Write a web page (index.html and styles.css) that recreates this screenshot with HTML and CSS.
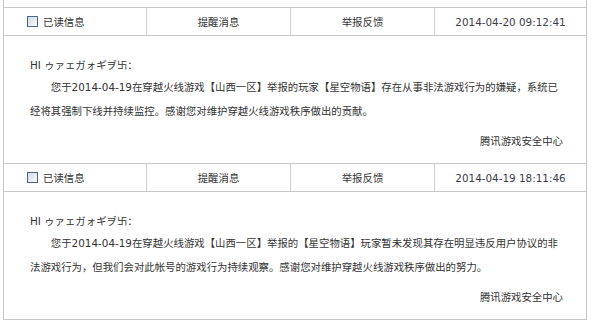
FILE: index.html
```html
<!DOCTYPE html>
<html lang="zh-CN">
    <head>
        <meta charset="UTF-8">
        <meta name="viewport" content="width=device-width, initial-scale=1.0">
        <title>消息中心</title>
        <link rel="stylesheet" href="styles.css">
    </head>
    <body>
        <div class="msg-list">
            <!-- tail of the previous message -->
            <div class="msg msg-tail"></div>

            <div class="msg">
                <div class="msg-head">
                    <div class="cell cell-first"><span class="check"></span>已读信息</div>
                    <div class="cell">提醒消息</div>
                    <div class="cell">举报反馈</div>
                    <div class="cell cell-date">2014-04-20 09:12:41</div>
                </div>
                <div class="msg-body">
                    <p class="greet">HI ゥァェガォギヺ卐：</p>
                    <p class="text">您于2014-04-19在穿越火线游戏【山西一区】举报的玩家【星空物语】存在从事非法游戏行为的嫌疑，系统已经将其强制下线并持续监控。感谢您对维护穿越火线游戏秩序做出的贡献。</p>
                    <p class="sign">腾讯游戏安全中心</p>
                </div>
            </div>

            <div class="msg">
                <div class="msg-head">
                    <div class="cell cell-first"><span class="check"></span>已读信息</div>
                    <div class="cell">提醒消息</div>
                    <div class="cell">举报反馈</div>
                    <div class="cell cell-date">2014-04-19 18:11:46</div>
                </div>
                <div class="msg-body">
                    <p class="greet">HI ゥァェガォギヺ卐：</p>
                    <p class="text">您于2014-04-19在穿越火线游戏【山西一区】举报的【星空物语】玩家暂未发现其存在明显违反用户协议的非法游戏行为，但我们会对此帐号的游戏行为持续观察。感谢您对维护穿越火线游戏秩序做出的努力。</p>
                    <p class="sign">腾讯游戏安全中心</p>
                </div>
            </div>
        </div>
    </body>
</html>
```

FILE: styles.css
```css
body {
    margin: 0;
    background-color: #fff;
    color: #333;
    font-family: "DejaVu Sans", "Noto Sans CJK SC", sans-serif;
    font-size: 10.4px;
}
.msg-list {
    margin-left: 3px;
    width: 582px;
    border-left: 1px solid #c8c8c8;
    border-right: 1px solid #c8c8c8;
}
.msg {
    border-bottom: 1px solid #c8c8c8;
}
.msg-tail {
    height: 7px;
}
.msg-head {
    display: grid;
    grid-template-columns: 143px 144px 144px 1fr;
    height: 27px;
    border-bottom: 1px solid #c8c8c8;
}
.cell {
    display: flex;
    align-items: center;
    justify-content: center;
    border-right: 1px solid #d0d0d0;
}
.cell-first {
    justify-content: flex-start;
    padding-left: 23px;
}
.cell-date {
    border-right: none;
    color: #3d3d4a;
}
.check {
    width: 9px;
    height: 9px;
    margin-right: 5px;
    border: 1px solid #4a6585;
    background: linear-gradient(135deg, #d4dbe4, #f7f9fb);
}
.msg-body {
    padding: 19px 23px 12px 26px;
}
.msg-body p {
    margin: 0;
}
.greet {
    line-height: 20px;
}
.text {
    line-height: 24px;
    text-indent: 2em;
}
.sign {
    margin-top: 8px !important;
    line-height: 20px;
    text-align: right;
}
```
